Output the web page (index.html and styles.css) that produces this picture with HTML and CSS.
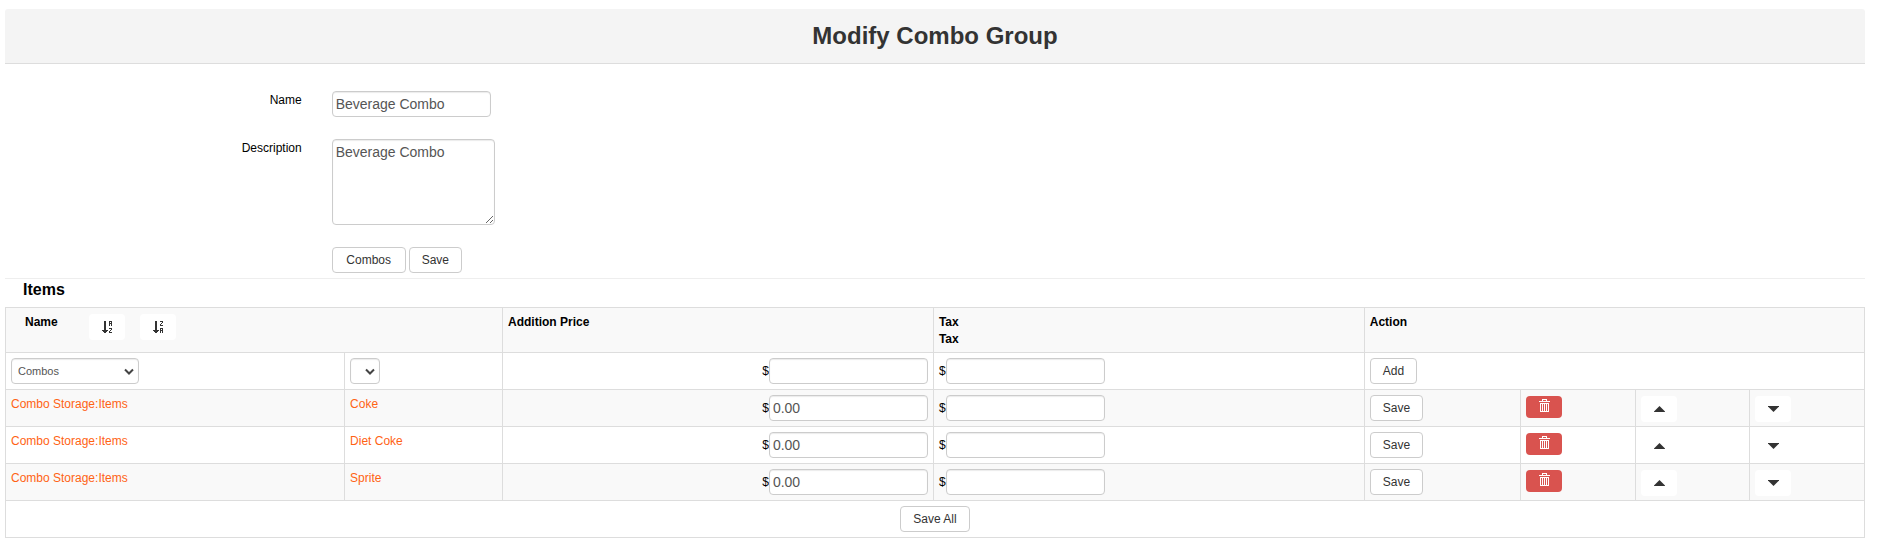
FILE: index.html
```
<!DOCTYPE html>
<html lang="en">
<head>
<meta charset="utf-8">
<title>Modify Combo Group</title>
<link rel="stylesheet" href="styles.css">
</head>
<body>
<svg class="sprite" aria-hidden="true">
  <symbol id="trash" viewBox="0 0 11 13">
    <path d="M3 0h5v2h3v1H0V2h3zM4 1v1h3V1zM1 4h9v9H1zM2 5v7h1V5zM4 5v7h1V5zM6 5v7h1V5zM8 5v7h1V5z" fill-rule="evenodd"/>
  </symbol>
  <symbol id="letter-a" viewBox="0 0 3 5">
    <path d="M0 0h3v5H2V3H1v2H0zM1 1v1h1V1z" fill-rule="evenodd"/>
  </symbol>
  <symbol id="letter-z" viewBox="0 0 3 5">
    <path d="M0 0h3v2H2v1H1v1h2v1H0V3h1V2h1V1H0z"/>
  </symbol>
  <symbol id="arrow-down" viewBox="0 0 6 12">
    <path d="M2 0h2v9h2v1H5v1H4v1H2v-1H1v-1H0V9h2z"/>
  </symbol>
  <symbol id="caret-up" viewBox="0 0 11 6"><path d="M5.500 0L11 5.500V6H0v-.5z"/></symbol>
  <symbol id="caret-down" viewBox="0 0 11 6"><path d="M0 0h11v.5L5.500 6L0 .5z"/></symbol>
</svg>

<main class="page">
  <header class="page-header"><h1 class="title">Modify Combo Group</h1></header>

  <form class="details">
    <label class="label" for="name">Name</label>
    <div><input class="field" id="name" type="text" value="Beverage Combo"></div>
    <label class="label" for="description">Description</label>
    <div><textarea class="field area" id="description">Beverage Combo</textarea></div>
    <div class="actions">
      <button class="btn btn-wide" type="button">Combos</button>
      <button class="btn" type="button">Save</button>
    </div>
  </form>

  <h2 class="subtitle">Items</h2>

  <table class="items">
    <colgroup>
      <col class="c-store"><col class="c-item"><col class="c-price"><col class="c-price">
      <col class="c-save"><col class="c-tool"><col class="c-tool"><col class="c-tool">
    </colgroup>
    <thead>
      <tr class="shade">
        <th colspan="2">
          <div class="name-head">
            <span class="name-text">Name</span>
            <button class="btn icon-btn" type="button" aria-label="Sort A to Z">
              <svg class="sort" viewBox="0 0 11 12"><use href="#arrow-down" width="6" height="12"/><use href="#letter-a" x="7" width="3" height="5"/><use href="#letter-z" x="7" y="7" width="3" height="5"/></svg>
            </button>
            <button class="btn icon-btn" type="button" aria-label="Sort Z to A">
              <svg class="sort" viewBox="0 0 11 12"><use href="#arrow-down" width="6" height="12"/><use href="#letter-z" x="7" width="3" height="5"/><use href="#letter-a" x="7" y="7" width="3" height="5"/></svg>
            </button>
          </div>
        </th>
        <th>Addition Price</th>
        <th>Tax<br>Tax</th>
        <th colspan="4">Action</th>
      </tr>
    </thead>
    <tbody>
      <tr>
        <td><select class="field select" aria-label="Category"><option>Combos</option></select></td>
        <td><select class="field select select-empty" aria-label="Item"><option></option></select></td>
        <td><label class="money money-right">$<input class="field" type="text" aria-label="Addition price"></label></td>
        <td><label class="money">$<input class="field" type="text" aria-label="Tax"></label></td>
        <td colspan="4"><button class="btn" type="button">Add</button></td>
      </tr>
      <tr class="shade">
        <td><a class="link" href="#items">Combo Storage:Items</a></td>
        <td><a class="link" href="#coke">Coke</a></td>
        <td><label class="money money-right">$<input class="field" type="text" value="0.00" aria-label="Coke addition price"></label></td>
        <td><label class="money">$<input class="field" type="text" aria-label="Coke tax"></label></td>
        <td><button class="btn" type="button">Save</button></td>
        <td class="tool"><button class="btn icon-btn danger" type="button" aria-label="Delete Coke"><svg class="trash"><use href="#trash"/></svg></button></td>
        <td class="tool"><button class="btn icon-btn" type="button" aria-label="Move Coke up"><svg class="caret"><use href="#caret-up"/></svg></button></td>
        <td class="tool"><button class="btn icon-btn" type="button" aria-label="Move Coke down"><svg class="caret"><use href="#caret-down"/></svg></button></td>
      </tr>
      <tr>
        <td><a class="link" href="#items">Combo Storage:Items</a></td>
        <td><a class="link" href="#diet-coke">Diet Coke</a></td>
        <td><label class="money money-right">$<input class="field" type="text" value="0.00" aria-label="Diet Coke addition price"></label></td>
        <td><label class="money">$<input class="field" type="text" aria-label="Diet Coke tax"></label></td>
        <td><button class="btn" type="button">Save</button></td>
        <td class="tool"><button class="btn icon-btn danger" type="button" aria-label="Delete Diet Coke"><svg class="trash"><use href="#trash"/></svg></button></td>
        <td class="tool"><button class="btn icon-btn" type="button" aria-label="Move Diet Coke up"><svg class="caret"><use href="#caret-up"/></svg></button></td>
        <td class="tool"><button class="btn icon-btn" type="button" aria-label="Move Diet Coke down"><svg class="caret"><use href="#caret-down"/></svg></button></td>
      </tr>
      <tr class="shade">
        <td><a class="link" href="#items">Combo Storage:Items</a></td>
        <td><a class="link" href="#sprite">Sprite</a></td>
        <td><label class="money money-right">$<input class="field" type="text" value="0.00" aria-label="Sprite addition price"></label></td>
        <td><label class="money">$<input class="field" type="text" aria-label="Sprite tax"></label></td>
        <td><button class="btn" type="button">Save</button></td>
        <td class="tool"><button class="btn icon-btn danger" type="button" aria-label="Delete Sprite"><svg class="trash"><use href="#trash"/></svg></button></td>
        <td class="tool"><button class="btn icon-btn" type="button" aria-label="Move Sprite up"><svg class="caret"><use href="#caret-up"/></svg></button></td>
        <td class="tool"><button class="btn icon-btn" type="button" aria-label="Move Sprite down"><svg class="caret"><use href="#caret-down"/></svg></button></td>
      </tr>
      <tr>
        <td colspan="8"><button class="btn save-all" type="button">Save All</button></td>
      </tr>
    </tbody>
  </table>
</main>
</body>
</html>
```

FILE: styles.css
```
* { box-sizing: border-box; }

body {
  margin: 0;
  background: #fff;
  color: #000;
  font: 12px/17px "Liberation Sans", Arial, sans-serif;
}

.sprite { display: none; }

.page { margin: 9px 14px 0 5px; }

.page-header {
  padding: 13px 0 14px;
  background: #f4f4f4;
  border-bottom: 1px solid #ddd;
  border-radius: 3px 3px 0 0;
}

.title {
  margin: 0;
  color: #333;
  font-size: 24px;
  line-height: 27px;
  text-align: center;
}

.details {
  display: grid;
  grid-template-columns: 15.95% 1fr;
  gap: 22px 30px;
  padding: 27px 0 5px;
  border-bottom: 1px solid #eee;
}

.label {
  padding-top: 1px;
  text-align: right;
}

.actions {
  grid-column: 2;
  display: flex;
  gap: 3px;
}

.field {
  display: block;
  width: 159px;
  height: 26px;
  margin: 0;
  padding: 2px 3px;
  border: 1px solid #ccc;
  border-radius: 4px;
  background: #fff;
  box-shadow: inset 0 1px 1px rgba(0, 0, 0, .08);
  color: #555;
  font: 14px/20px "Liberation Sans", Arial, sans-serif;
}

.area {
  width: 163px;
  height: 86px;
  resize: both;
}

.select {
  width: 128px;
  padding: 2px 16px 2px 6px;
  appearance: none;
  background: #fff url("data:image/svg+xml,%3Csvg xmlns='http://www.w3.org/2000/svg' width='10' height='7'%3E%3Cpath d='M1 1.500l4 4 4-4' fill='none' stroke='%23444' stroke-width='2'/%3E%3C/svg%3E") no-repeat right 4px center;
  font-size: 11px;
}

.select-empty { width: 30px; }

.btn {
  display: flex;
  align-items: center;
  justify-content: center;
  height: 26px;
  margin: 0;
  padding: 1px 12px 0;
  border: 1px solid #ccc;
  border-radius: 4px;
  background: #fff;
  color: #333;
  font: 12px/17px "Liberation Sans", Arial, sans-serif;
  white-space: nowrap;
}

.btn-wide { min-width: 74px; }

.icon-btn {
  width: 36px;
  padding: 0;
  border: 0;
  fill: #333;
}

.tool .icon-btn { padding-left: 1px; }

.danger {
  height: 22px;
  padding-bottom: 3px;
  background: #d9534f;
  fill: #fff;
}

.save-all { margin: 0 auto; }

.subtitle {
  margin: 0 0 6px;
  padding-left: 18px;
  font-size: 16px;
  line-height: 22px;
}

.items {
  width: 100%;
  table-layout: fixed;
  border-collapse: collapse;
}

.items th,
.items td {
  padding: 5px;
  border: 1px solid #ddd;
  text-align: left;
  vertical-align: top;
}

.items th { padding: 6px 5px 4px; }

.items .tool { padding: 6px 5px 4px; }

.shade { background: #f9f9f9; }

.c-store { width: 18.24%; }
.c-item { width: 8.5%; }
.c-price { width: 23.18%; }
.c-save { width: 8.4%; }
.c-tool { width: 6.17%; }

.name-head {
  display: flex;
  align-items: flex-start;
  gap: 15px;
  padding-left: 14px;
}

.name-text { width: 49px; }

.money {
  display: flex;
  align-items: center;
}

.money-right { justify-content: flex-end; }

.link {
  display: block;
  padding-top: 1px;
  color: #ff6314;
  text-decoration: none;
}

.sort { width: 11px; height: 12px; }
.trash { width: 11px; height: 13px; }
.caret { width: 11px; height: 6px; }
```
